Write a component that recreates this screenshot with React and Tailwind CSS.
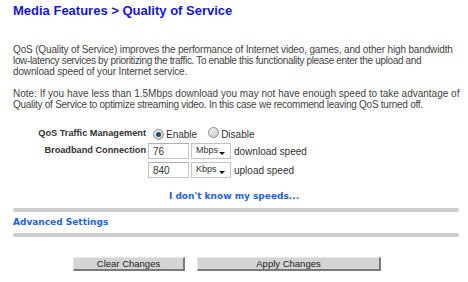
export default function App() {
  const radio = (checked) => (
    <span className="inline-flex items-center justify-center w-[11px] h-[11px] rounded-full border border-[#8c8c8c] bg-gradient-to-br from-[#f4f4f4] to-[#c8c8c8]">
      {checked && <span className="w-[5px] h-[5px] rounded-full bg-[#1d4f73]" />}
    </span>
  );
  const select = (label) => (
    <div className="relative w-[40px] h-[16px] border border-[#c4c4c4] bg-white flex items-center pl-[4px] text-[9px] text-[#333]">
      {label}
      <span className="absolute right-[5px] top-[8px] w-0 h-0 border-l-[3px] border-r-[3px] border-t-[3px] border-l-transparent border-r-transparent border-t-[#111]" />
    </div>
  );
  const input = (val) => (
    <div className="w-[41px] h-[16px] border border-[#c4c4c4] border-t-[#b0b0b0] bg-white flex items-center pl-[4px] text-[10px] text-[#333]">
      {val}
    </div>
  );
  return (
    <div
      className="w-[468px] h-[282px] bg-white overflow-hidden text-[#444]"
      style={{ fontFamily: '"Liberation Sans", Arial, sans-serif' }}
    >
      <h1 className="pl-[13px] pt-[3px] text-[13px] leading-[15px] font-bold text-[#1414ee]">
        Media Features &gt; Quality of Service
      </h1>
      <div className="mt-[25.5px] pl-[13px] text-[10px] leading-[11px] text-[#444] whitespace-nowrap">
        <p>
          <span className="block tracking-[-0.15px]">
            QoS (Quality of Service) improves the performance of Internet video, games, and other high bandwidth
          </span>
          <span className="block tracking-[-0.34px]">
            low-latency services by prioritizing the traffic. To enable this functionality please enter the upload and
          </span>
          <span className="block tracking-[-0.15px]">download speed of your Internet service.</span>
        </p>
        <p className="mt-[11px]">
          <span className="block tracking-[0px]">
            Note: If you have less than 1.5Mbps download you may not have enough speed to take advantage of
          </span>
          <span className="block tracking-[-0.26px]">
            Quality of Service to optimize streaming video. In this case we recommend leaving QoS turned off.
          </span>
        </p>
      </div>

      <div className="mt-[17.5px] flex flex-col">
        <div className="flex h-[14px] items-center">
          <div className="w-[146px] text-right font-bold text-[9.2px] text-[#333]">QoS Traffic Management</div>
          <div className="ml-[7px] flex items-center text-[10px] text-[#333]">
            {radio(true)}
            <span className="ml-[2px]">Enable</span>
            <span className="ml-[11px]">{radio(false)}</span>
            <span className="ml-[2px]">Disable</span>
          </div>
        </div>
        <div className="mt-[2px] flex h-[16px] items-center">
          <div className="w-[146px] text-right font-bold text-[9.2px] text-[#333]">Broadband Connection</div>
          <div className="ml-[2px] flex items-center">
            {input("76")}
            <div className="ml-[2px]">{select("Mbps")}</div>
            <span className="ml-[3px] text-[10px] text-[#333]">download speed</span>
          </div>
        </div>
        <div className="mt-[3px] flex h-[16px] items-center">
          <div className="w-[146px]" />
          <div className="ml-[2px] flex items-center">
            {input("840")}
            <div className="ml-[2px]">{select("Kbps")}</div>
            <span className="ml-[3px] text-[10px] text-[#333]">upload speed</span>
          </div>
        </div>
      </div>

      <div
        className="mt-[13.4px] text-center text-[9px] leading-[11px] font-bold text-[#1e62f0]"
        style={{ fontFamily: '"DejaVu Sans", Verdana, sans-serif' }}
      >
        I don't know my speeds...
      </div>
      <div className="mt-[5.6px] ml-[13px] w-[446px] h-[4px] rounded-full bg-[#cccccc]" />
      <div
        className="mt-[5.4px] pl-[13px] text-[9px] leading-[11px] font-bold text-[#1e62f0]"
        style={{ fontFamily: '"DejaVu Sans", Verdana, sans-serif' }}
      >
        Advanced Settings
      </div>
      <div className="mt-[4.6px] ml-[13px] w-[446px] h-[4px] rounded-full bg-[#cccccc]" />

      <div className="mt-[20px] flex pl-[73px] gap-[12px]">
        <button className="w-[112px] h-[14px] bg-[#d4d4d4] border-t border-l border-[#e6e6e6] border-r-2 border-b-2 border-r-[#7a7a7a] border-b-[#7a7a7a] text-[9.5px] leading-[11px] text-[#222] flex items-center justify-center">
          Clear Changes
        </button>
        <button className="w-[184px] h-[14px] bg-[#d4d4d4] border-t border-l border-[#e6e6e6] border-r-2 border-b-2 border-r-[#7a7a7a] border-b-[#7a7a7a] text-[9.5px] leading-[11px] text-[#222] flex items-center justify-center">
          Apply Changes
        </button>
      </div>
    </div>
  );
}
